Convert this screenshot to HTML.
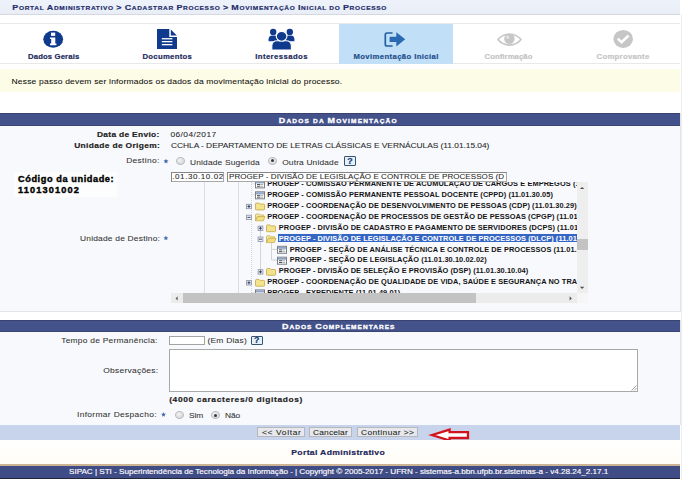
<!DOCTYPE html>
<html><head><meta charset="utf-8">
<style>
html,body{margin:0;padding:0;width:686px;height:480px;overflow:hidden;background:#fff;font-family:"Liberation Sans",sans-serif;position:relative;}
div{position:absolute;box-sizing:border-box;}
.t{white-space:nowrap;line-height:1;transform-origin:0 0;-webkit-text-stroke:0.08px currentColor;}
.t.bd{-webkit-text-stroke:0.2px currentColor;}
.tr{white-space:nowrap;line-height:1;font-size:7.4px;font-weight:bold;color:#141414;}
svg{position:absolute;left:0;top:0;overflow:visible;}
.radio{width:9px;height:8px;border:1px solid #b9bbbe;border-radius:50%;background:radial-gradient(ellipse at 40% 35%,#f4f4f4 0,#e2e2e4 45%,#cfd0d3 100%);}
.radio.on::after{content:"";position:absolute;left:2px;top:1.6px;width:3px;height:3px;border-radius:50%;background:#3a3a3a;}
.help{border:1px solid #36546f;border-radius:1px;background:#e4f0fa;}
.btn{border:1px solid #b4b7be;background:#e6e8ec;}
</style></head><body>

<!-- breadcrumb bar -->
<div style="left:0;top:0;width:680px;height:15px;background:linear-gradient(#eef3fb,#e9eef6);border-bottom:1px solid #d5d8de;"></div>

<!-- wizard -->
<div style="left:0;top:23px;width:680px;height:1px;background:#e8e8e8;"></div>
<div style="left:0;top:63px;width:680px;height:1px;background:#e8e8e8;"></div>
<div style="left:338.5px;top:24px;width:114px;height:39.5px;background:#c2dff8;"></div>

<svg width="686" height="480" viewBox="0 0 686 480">
  <!-- info -->
  <ellipse cx="53.2" cy="39.3" rx="9.9" ry="8.5" fill="#0f3a8e"/>
  <rect x="51" y="32.6" width="4.2" height="3.3" fill="#fff"/>
  <path d="M50 37.4 H55.3 V43.6 H56.4 V45.3 H50 V43.6 H51.2 V39.1 H50 Z" fill="#fff"/>
  <!-- document -->
  <path d="M157 29 H169.3 V36.9 H177 V49 H157 Z" fill="#0f3a8e"/>
  <path d="M170.8 29.6 L176.8 35.4 H170.8 Z" fill="#0f3a8e"/>
  <rect x="161.8" y="38.1" width="10.6" height="1.3" fill="#fff"/>
  <rect x="161.8" y="41.0" width="10.6" height="1.3" fill="#fff"/>
  <rect x="161.8" y="44.0" width="10.6" height="1.3" fill="#fff"/>
  <!-- users -->
  <g fill="#0f3a8e">
    <circle cx="273.2" cy="31.9" r="3.2"/>
    <circle cx="289.8" cy="31.9" r="3.2"/>
    <path d="M268.6 41.2 V39.2 Q268.6 35.4 272.4 35.4 H274.2 Q278 35.4 278 39.2 V41.2 Z"/>
    <path d="M285 41.2 V39.2 Q285 35.4 288.8 35.4 H290.6 Q294.4 35.4 294.4 39.2 V41.2 Z"/>
  </g>
  <g fill="#0f3a8e" stroke="#fff" stroke-width="1.1">
    <path d="M271.8 50 V46 Q271.8 40.7 277.2 40.7 H286 Q291.4 40.7 291.4 46 V50 Z"/>
    <ellipse cx="281.6" cy="36.3" rx="5.3" ry="4.9"/>
  </g>
  <!-- sign-in -->
  <path d="M392.6 33 H387 Q385.3 33 385.3 34.8 V44.2 Q385.3 46 387 46 H392.6" fill="none" stroke="#22609f" stroke-width="1.7"/>
  <path d="M389.6 36.8 H396.3 V32.2 L405.2 39.3 L396.3 46.4 V41.9 H389.6 Z" fill="#2a6ab2"/>
  <!-- eye -->
  <path d="M498 39.6 C501.5 35 505.5 34.2 509.5 34.2 C513.5 34.2 517.5 35 521 39.6 C517.5 44.2 513.5 45.1 509.5 45.1 C505.5 45.1 501.5 44.2 498 39.6 Z" fill="none" stroke="#c6c6c6" stroke-width="1.6"/>
  <circle cx="509.4" cy="38.8" r="5.2" fill="#c6c6c6"/>
  <circle cx="507.6" cy="37.2" r="1.6" fill="#e4e4e4"/>
  <!-- check circle -->
  <ellipse cx="623.2" cy="38.9" rx="9.8" ry="9" fill="#c6c6c6"/>
  <path d="M617.8 38.6 L621.5 42.2 L628.6 35.6" fill="none" stroke="#fff" stroke-width="2.6"/>
</svg>

<!-- info band -->
<div style="left:0;top:69px;width:680px;height:23px;background:#fdfce7;"></div>

<!-- section 1 -->
<div style="left:0;top:113px;width:681px;height:199px;background:#f8f9fc;border-right:1px solid #e3e5ea;border-bottom:1px solid #e3e5ea;"></div>
<div style="left:0;top:113px;width:680px;height:13px;background:#44528b;border-top:1px solid #39426f;border-bottom:1px solid #3b4573;"></div>

<div style="left:14px;top:172px;width:103px;height:25px;background:#fdfdfe;"></div>
<!-- radios destino -->
<div class="radio" style="left:176px;top:156.8px;"></div>
<div class="radio on" style="left:267.8px;top:156.8px;"></div>
<svg width="686" height="480"><path d="M166.00 158.70 L166.69 160.35 L168.47 160.50 L167.11 161.66 L167.53 163.40 L166.00 162.47 L164.47 163.40 L164.89 161.66 L163.53 160.50 L165.31 160.35 Z" fill="#4468ad"/></svg>
<div class="help" style="left:344.2px;top:156.1px;width:11.5px;height:9.5px;"></div>
<div class="t bd" style="left:347.3px;top:156.6px;font-size:8.8px;font-weight:bold;color:#173b6e;">?</div>

<!-- inputs -->
<div style="left:170.9px;top:171.6px;width:53.6px;height:10.3px;background:#fff;border:1px solid #858585;border-right-color:#a8a8a8;border-bottom-color:#a8a8a8;"></div>
<div style="left:227.2px;top:171.6px;width:279.4px;height:10.3px;background:#fff;border:1px solid #858585;border-right-color:#a8a8a8;border-bottom-color:#a8a8a8;"></div>

<!-- star for destino unit -->
<svg width="686" height="480"><path d="M165.90 235.60 L166.59 237.25 L168.37 237.40 L167.01 238.56 L167.43 240.30 L165.90 239.37 L164.37 240.30 L164.79 238.56 L163.43 237.40 L165.21 237.25 Z" fill="#4468ad"/></svg>

<!-- tree container -->
<div id="tree" style="left:171px;top:181.8px;width:416.6px;height:121.5px;overflow:hidden;">
<svg width="420" height="125"><path d="M33.5 0 V111.69999999999999 M67.5 0 V111.69999999999999" stroke="#dcdde0" stroke-width="1"/><path d="M80.5 0 V111.69999999999999 M80.5 1.799999999999983 H84 M80.5 12.699999999999989 H84 M80.5 110.69999999999999 H84" stroke="#c8cacd" stroke-width="0.8" stroke-dasharray="1 1"/><path d="M89.5 47.19999999999999 V88.19999999999999 M100.5 59.19999999999999 V78.0 M100.5 67.39999999999998 H106 M100.5 78.0 H106" stroke="#c8cacd" stroke-width="0.8"/><g transform="translate(84.00,-1.60)"><rect x="0.5" y="0.5" width="9" height="7" fill="#fdfdfd" stroke="#7b7f86" stroke-width="1"/><rect x="1" y="1" width="8" height="2" fill="#8ea3c7"/><rect x="2" y="3.6" width="3.2" height="0.9" fill="#404040"/><rect x="5.4" y="3.6" width="2.8" height="0.9" fill="#9aa"/><rect x="2" y="5.4" width="3.2" height="0.9" fill="#404040"/><rect x="5.4" y="5.4" width="2.8" height="0.9" fill="#9aa"/></g><g transform="translate(84.00,9.30)"><rect x="0.5" y="0.5" width="9" height="7" fill="#fdfdfd" stroke="#7b7f86" stroke-width="1"/><rect x="1" y="1" width="8" height="2" fill="#8ea3c7"/><rect x="2" y="3.6" width="3.2" height="0.9" fill="#404040"/><rect x="5.4" y="3.6" width="2.8" height="0.9" fill="#9aa"/><rect x="2" y="5.4" width="3.2" height="0.9" fill="#404040"/><rect x="5.4" y="5.4" width="2.8" height="0.9" fill="#9aa"/></g><g transform="translate(84.00,20.60)"><path d="M0.5 1.5 Q0.5 0.5 1.5 0.5 H4 L5 1.5 H8.8 Q9.6 1.5 9.6 2.3 V6.6 Q9.6 7.3 8.8 7.3 H1.3 Q0.5 7.3 0.5 6.6 Z" fill="#f3e38c" stroke="#c9ad52" stroke-width="0.9"/></g><g transform="translate(75.20,21.90)"><rect x="0.4" y="0.4" width="4.8" height="4.4" fill="#eef0f6" stroke="#8790a8" stroke-width="0.8"/><path d="M1.2 2.55 H4.3 M2.75 1 V4.1" stroke="#2b3550" stroke-width="0.9"/></g><g transform="translate(84.00,31.50)"><path d="M0.5 1.5 Q0.5 0.5 1.5 0.5 H4 L5 1.5 H8.6 V3 H2.6 L0.5 7.2 Z" fill="#f6eaa8" stroke="#c9ad52" stroke-width="0.8"/><path d="M2.4 3 H10 L8.4 7.3 H0.5 Z" fill="#f1de7c" stroke="#c9ad52" stroke-width="0.8"/></g><g transform="translate(75.20,32.80)"><rect x="0.4" y="0.4" width="4.8" height="4.4" fill="#eef0f6" stroke="#8790a8" stroke-width="0.8"/><path d="M1.2 2.55 H4.3" stroke="#2b3550" stroke-width="0.9"/></g><g transform="translate(95.00,42.40)"><path d="M0.5 1.5 Q0.5 0.5 1.5 0.5 H4 L5 1.5 H8.8 Q9.6 1.5 9.6 2.3 V6.6 Q9.6 7.3 8.8 7.3 H1.3 Q0.5 7.3 0.5 6.6 Z" fill="#f3e38c" stroke="#c9ad52" stroke-width="0.9"/></g><g transform="translate(86.70,43.70)"><rect x="0.4" y="0.4" width="4.8" height="4.4" fill="#eef0f6" stroke="#8790a8" stroke-width="0.8"/><path d="M1.2 2.55 H4.3 M2.75 1 V4.1" stroke="#2b3550" stroke-width="0.9"/></g><g transform="translate(95.00,53.30)"><path d="M0.5 1.5 Q0.5 0.5 1.5 0.5 H4 L5 1.5 H8.6 V3 H2.6 L0.5 7.2 Z" fill="#f6eaa8" stroke="#c9ad52" stroke-width="0.8"/><path d="M2.4 3 H10 L8.4 7.3 H0.5 Z" fill="#f1de7c" stroke="#c9ad52" stroke-width="0.8"/></g><g transform="translate(86.70,54.60)"><rect x="0.4" y="0.4" width="4.8" height="4.4" fill="#eef0f6" stroke="#8790a8" stroke-width="0.8"/><path d="M1.2 2.55 H4.3" stroke="#2b3550" stroke-width="0.9"/></g><g transform="translate(106.00,63.80)"><rect x="0.5" y="0.5" width="9" height="7" fill="#fdfdfd" stroke="#7b7f86" stroke-width="1"/><rect x="1" y="1" width="8" height="2" fill="#8ea3c7"/><rect x="2" y="3.6" width="3.2" height="0.9" fill="#404040"/><rect x="5.4" y="3.6" width="2.8" height="0.9" fill="#9aa"/><rect x="2" y="5.4" width="3.2" height="0.9" fill="#404040"/><rect x="5.4" y="5.4" width="2.8" height="0.9" fill="#9aa"/></g><g transform="translate(106.00,74.70)"><rect x="0.5" y="0.5" width="9" height="7" fill="#fdfdfd" stroke="#7b7f86" stroke-width="1"/><rect x="1" y="1" width="8" height="2" fill="#8ea3c7"/><rect x="2" y="3.6" width="3.2" height="0.9" fill="#404040"/><rect x="5.4" y="3.6" width="2.8" height="0.9" fill="#9aa"/><rect x="2" y="5.4" width="3.2" height="0.9" fill="#404040"/><rect x="5.4" y="5.4" width="2.8" height="0.9" fill="#9aa"/></g><g transform="translate(95.00,86.00)"><path d="M0.5 1.5 Q0.5 0.5 1.5 0.5 H4 L5 1.5 H8.8 Q9.6 1.5 9.6 2.3 V6.6 Q9.6 7.3 8.8 7.3 H1.3 Q0.5 7.3 0.5 6.6 Z" fill="#f3e38c" stroke="#c9ad52" stroke-width="0.9"/></g><g transform="translate(86.70,87.30)"><rect x="0.4" y="0.4" width="4.8" height="4.4" fill="#eef0f6" stroke="#8790a8" stroke-width="0.8"/><path d="M1.2 2.55 H4.3 M2.75 1 V4.1" stroke="#2b3550" stroke-width="0.9"/></g><g transform="translate(84.00,96.90)"><path d="M0.5 1.5 Q0.5 0.5 1.5 0.5 H4 L5 1.5 H8.8 Q9.6 1.5 9.6 2.3 V6.6 Q9.6 7.3 8.8 7.3 H1.3 Q0.5 7.3 0.5 6.6 Z" fill="#f3e38c" stroke="#c9ad52" stroke-width="0.9"/></g><g transform="translate(75.20,98.20)"><rect x="0.4" y="0.4" width="4.8" height="4.4" fill="#eef0f6" stroke="#8790a8" stroke-width="0.8"/><path d="M1.2 2.55 H4.3 M2.75 1 V4.1" stroke="#2b3550" stroke-width="0.9"/></g><g transform="translate(84.00,107.40)"><rect x="0.5" y="0.5" width="9" height="7" fill="#fdfdfd" stroke="#7b7f86" stroke-width="1"/><rect x="1" y="1" width="8" height="2" fill="#8ea3c7"/><rect x="2" y="3.6" width="3.2" height="0.9" fill="#404040"/><rect x="5.4" y="3.6" width="2.8" height="0.9" fill="#9aa"/><rect x="2" y="5.4" width="3.2" height="0.9" fill="#404040"/><rect x="5.4" y="5.4" width="2.8" height="0.9" fill="#9aa"/></g></svg>
<div class="tr" style="left:96.20px;top:-1.66px;letter-spacing:0.080px;">PROGEP - COMISSÃO PERMANENTE DE ACUMULAÇÃO DE CARGOS E EMPREGOS (11.01.30.06)</div>
<div class="tr" style="left:96.20px;top:9.24px;letter-spacing:0.080px;">PROGEP - COMISSÃO PERMANENTE PESSOAL DOCENTE (CPPD) (11.01.30.05)</div>
<div class="tr" style="left:96.20px;top:20.14px;letter-spacing:0.080px;">PROGEP - COORDENAÇÃO DE DESENVOLVIMENTO DE PESSOAS (CDP) (11.01.30.29)</div>
<div class="tr" style="left:96.20px;top:31.04px;letter-spacing:0.080px;">PROGEP - COORDENAÇÃO DE PROCESSOS DE GESTÃO DE PESSOAS (CPGP) (11.01.30.10)</div>
<div class="tr" style="left:107.80px;top:41.94px;letter-spacing:0.080px;">PROGEP - DIVISÃO DE CADASTRO E PAGAMENTO DE SERVIDORES (DCPS) (11.01.30.10.01)</div>
<div style="left:106.50px;top:52.40px;width:400px;height:7.6px;background:#3566c4;"></div>
<div class="tr" style="left:107.80px;top:52.84px;letter-spacing:0.080px;color:#fff">PROGEP - DIVISÃO DE LEGISLAÇÃO E CONTROLE DE PROCESSOS (DLCP) (11.01.30.10.02)</div>
<div class="tr" style="left:118.70px;top:63.74px;letter-spacing:0.080px;">PROGEP - SEÇÃO DE ANÁLISE TÉCNICA E CONTROLE DE PROCESSOS (11.01.30.10.02.01)</div>
<div class="tr" style="left:118.70px;top:74.64px;letter-spacing:0.080px;">PROGEP - SEÇÃO DE LEGISLAÇÃO (11.01.30.10.02.02)</div>
<div class="tr" style="left:107.80px;top:85.54px;letter-spacing:0.080px;">PROGEP - DIVISÃO DE SELEÇÃO E PROVISÃO (DSP) (11.01.30.10.04)</div>
<div class="tr" style="left:96.20px;top:96.44px;letter-spacing:0.080px;">PROGEP - COORDENAÇÃO DE QUALIDADE DE VIDA, SAÚDE E SEGURANÇA NO TRABALHO (11.01.30.08)</div>
<div class="tr" style="left:96.20px;top:107.34px;letter-spacing:0.080px;">PROGEP - EXPEDIENTE (11.01.49.01)</div>
<div style="left:405.60px;top:0;width:11px;height:111.70px;background:#eeeeee;"></div>
<div style="left:405.60px;top:57.10px;width:11px;height:11.3px;background:#c3c3c3;"></div>
<div style="left:0;top:111.70px;width:405.60px;height:9.5px;background:#ececec;"></div>
<div style="left:11.60px;top:111.70px;width:293.50px;height:9.5px;background:#c3c3c3;"></div>
<div style="left:405.60px;top:111.70px;width:11px;height:9.5px;background:#f6f6f6;"></div>
<svg width="420" height="125"><path d="M408.90 7.10 L411.10 4.90 L413.30 7.10 Z" fill="#505050"/><path d="M408.90 104.70 L411.10 106.90 L413.30 104.70 Z" fill="#505050"/><path d="M4.50 116.40 L6.70 114.20 V118.60 Z" fill="#606060"/><path d="M400.80 116.40 L398.60 114.20 V118.60 Z" fill="#505050"/></svg>
</div>

<!-- section 2 -->
<div style="left:0;top:320px;width:681px;height:105px;background:#f8f9fc;border-right:1px solid #e3e5ea;"></div>
<div style="left:0;top:320px;width:680px;height:12.2px;background:#44528b;border-top:1px solid #39426f;border-bottom:1px solid #3b4573;"></div>
<div style="left:169px;top:335.8px;width:36px;height:9.6px;background:#fff;border:1px solid #a4a4a4;"></div>
<div class="help" style="left:250.5px;top:335.8px;width:12.4px;height:9.6px;"></div>
<div class="t bd" style="left:254.1px;top:336.4px;font-size:8.8px;font-weight:bold;color:#173b6e;">?</div>
<div style="left:169px;top:348.9px;width:469px;height:42.8px;background:#fff;border:1px solid #a8a8a8;"></div>
<svg width="686" height="480"><path d="M631.5 390.5 L636.5 385.5 M634 390.5 L636.5 388" stroke="#9a9a9a" stroke-width="0.9"/>
<path d="M163.50 412.00 L164.19 413.65 L165.97 413.80 L164.61 414.96 L165.03 416.70 L163.50 415.77 L161.97 416.70 L162.39 414.96 L161.03 413.80 L162.81 413.65 Z" fill="#4468ad"/></svg>
<div class="radio" style="left:174.6px;top:411px;"></div>
<div class="radio on" style="left:211.3px;top:411px;"></div>

<!-- button bar -->
<div style="left:0;top:425px;width:680px;height:15px;background:#c8d4eb;"></div>
<div class="btn" style="left:257.4px;top:427.4px;width:47.9px;height:9.8px;"></div>
<div class="btn" style="left:308.7px;top:427.4px;width:43.5px;height:9.8px;"></div>
<div class="btn" style="left:356.6px;top:427.4px;width:61.7px;height:9.8px;"></div>
<svg width="686" height="480"><path d="M432 435 L449.6 429.6 V432.2 H468 V438 H449.6 V440.5 Z" fill="#fff" stroke="#d3131c" stroke-width="2.3" stroke-linejoin="miter"/></svg>

<!-- footer -->
<div style="left:0;top:440px;width:680px;height:24px;background:linear-gradient(#fffffe,#fffdf6);"></div>
<div style="left:0;top:463.9px;width:680px;height:2.2px;background:#cbb393;"></div>
<div style="left:0;top:466.2px;width:680px;height:11.6px;background:#3f4c86;"></div>
<div style="left:0;top:477.8px;width:680px;height:1.4px;background:#23253a;"></div>
<div style="left:681px;top:14px;width:1px;height:466px;background:#eceef1;"></div>
<div style="left:2px;top:479px;width:110px;height:1px;background:#fff;"></div>
<div style="left:115px;top:479px;width:110px;height:1px;background:#fff;"></div>
<div style="left:228px;top:479px;width:110px;height:1px;background:#fff;"></div>
<div style="left:341px;top:479px;width:110px;height:1px;background:#fff;"></div>
<div style="left:454px;top:479px;width:110px;height:1px;background:#fff;"></div>
<div style="left:567px;top:479px;width:110px;height:1px;background:#fff;"></div>

<div class="t bd" style="left:12.30px;top:4.31px;transform:scaleY(0.88);font-size:6.55px;line-height:8.98px;font-weight:bold;color:#1f2d6b;letter-spacing:0.668px;"><span style="font-size:8.98px">P</span>ORTAL <span style="font-size:8.98px">A</span>DMINISTRATIVO <span style="font-size:8.98px">&gt;</span> <span style="font-size:8.98px">C</span>ADASTRAR <span style="font-size:8.98px">P</span>ROCESSO <span style="font-size:8.98px">&gt;</span> <span style="font-size:8.98px">M</span>OVIMENTAÇÃO <span style="font-size:8.98px">I</span>NICIAL DO <span style="font-size:8.98px">P</span>ROCESSO</div>
<div class="t bd" style="left:28.00px;top:53.84px;transform:scaleY(0.88);font-size:7.73px;font-weight:bold;color:#1d2b5c;letter-spacing:0.132px;">Dados Gerais</div>
<div class="t bd" style="left:142.50px;top:53.84px;transform:scaleY(0.88);font-size:7.73px;font-weight:bold;color:#1d2b5c;letter-spacing:0.287px;">Documentos</div>
<div class="t bd" style="left:255.20px;top:53.84px;transform:scaleY(0.88);font-size:7.73px;font-weight:bold;color:#1d2b5c;letter-spacing:0.427px;">Interessados</div>
<div class="t bd" style="left:353.40px;top:53.84px;transform:scaleY(0.88);font-size:7.73px;font-weight:bold;color:#23508c;letter-spacing:0.385px;">Movimentação Inicial</div>
<div class="t bd" style="left:484.50px;top:53.84px;transform:scaleY(0.88);font-size:7.73px;font-weight:bold;color:#c4c4c4;letter-spacing:0.072px;">Confirmação</div>
<div class="t bd" style="left:596.50px;top:53.84px;transform:scaleY(0.88);font-size:7.73px;font-weight:bold;color:#c4c4c4;letter-spacing:0.302px;">Comprovante</div>
<div class="t" style="left:11.50px;top:78.15px;transform:scaleY(0.88);font-size:8.52px;color:#111;letter-spacing:0.175px;">Nesse passo devem ser informados os dados da movimentação inicial do processo.</div>
<div class="t bd" style="left:278.80px;top:116.51px;transform:scaleY(0.88);font-size:6.55px;line-height:8.98px;font-weight:bold;color:#fff;letter-spacing:1.171px;-webkit-text-stroke:0.35px #fff;"><span style="font-size:8.98px">D</span>ADOS DA <span style="font-size:8.98px">M</span>OVIMENTAÇÃO</div>
<div class="t bd" style="left:97.00px;top:130.84px;transform:scaleY(0.88);font-size:8.41px;font-weight:bold;color:#222;letter-spacing:0.300px;">Data de Envio:</div>
<div class="t" style="left:170.40px;top:130.64px;transform:scaleY(0.88);font-size:8.41px;color:#2a2a2a;letter-spacing:0.417px;">06/04/2017</div>
<div class="t bd" style="left:74.20px;top:142.04px;transform:scaleY(0.88);font-size:8.41px;font-weight:bold;color:#222;letter-spacing:0.343px;">Unidade de Origem:</div>
<div class="t" style="left:171.00px;top:141.94px;transform:scaleY(0.88);font-size:8.41px;color:#2a2a2a;letter-spacing:-0.048px;">CCHLA - DEPARTAMENTO DE LETRAS CLÁSSICAS E VERNÁCULAS (11.01.15.04)</div>
<div class="t" style="left:126.20px;top:157.04px;transform:scaleY(0.88);font-size:8.41px;color:#333;letter-spacing:0.320px;">Destino:</div>
<div class="t" style="left:190.00px;top:158.54px;transform:scaleY(0.88);font-size:8.41px;color:#333;letter-spacing:0.157px;">Unidade Sugerida</div>
<div class="t" style="left:282.20px;top:158.54px;transform:scaleY(0.88);font-size:8.41px;color:#333;letter-spacing:0.142px;">Outra Unidade</div>
<div class="t bd" style="left:18.00px;top:175.11px;transform:scaleY(1.0);font-size:9.20px;font-weight:bold;color:#000;letter-spacing:0.579px;-webkit-text-stroke:0.4px #000;">Código da unidade:</div>
<div class="t bd" style="left:18.00px;top:186.21px;transform:scaleY(1.0);font-size:9.20px;font-weight:bold;color:#000;letter-spacing:1.144px;-webkit-text-stroke:0.4px #000;">1101301002</div>
<div class="t" style="left:80.00px;top:235.04px;transform:scaleY(0.88);font-size:8.41px;color:#333;letter-spacing:0.204px;">Unidade de Destino:</div>
<div class="t bd" style="left:281.90px;top:322.51px;transform:scaleY(0.88);font-size:6.55px;line-height:8.98px;font-weight:bold;color:#fff;letter-spacing:1.018px;-webkit-text-stroke:0.35px #fff;"><span style="font-size:8.98px">D</span>ADOS <span style="font-size:8.98px">C</span>OMPLEMENTARES</div>
<div class="t" style="left:61.20px;top:336.84px;transform:scaleY(0.88);font-size:8.41px;color:#333;letter-spacing:0.256px;">Tempo de Permanência:</div>
<div class="t" style="left:207.40px;top:336.84px;transform:scaleY(0.88);font-size:8.41px;color:#333;letter-spacing:0.248px;">(Em Dias)</div>
<div class="t" style="left:103.30px;top:366.84px;transform:scaleY(0.88);font-size:8.41px;color:#333;letter-spacing:0.264px;">Observações:</div>
<div class="t bd" style="left:169.20px;top:396.24px;transform:scaleY(0.88);font-size:8.41px;font-weight:bold;color:#222;letter-spacing:0.634px;">(4000 caracteres/0 digitados)</div>
<div class="t" style="left:77.00px;top:411.14px;transform:scaleY(0.88);font-size:8.41px;color:#333;letter-spacing:0.334px;">Informar Despacho:</div>
<div class="t" style="left:189.00px;top:412.34px;transform:scaleY(0.88);font-size:8.41px;color:#333;letter-spacing:-0.130px;">Sim</div>
<div class="t" style="left:225.00px;top:412.34px;transform:scaleY(0.88);font-size:8.41px;color:#333;letter-spacing:-0.090px;">Não</div>
<div class="t bd" style="left:291.30px;top:448.97px;transform:scaleY(0.88);font-size:8.64px;font-weight:bold;color:#1c2558;letter-spacing:0.325px;">Portal Administrativo</div>
<div class="t" style="left:69.00px;top:469.31px;transform:scaleY(0.88);font-size:8.18px;color:#fff;letter-spacing:-0.040px;-webkit-text-stroke:0.15px #fff;">SIPAC | STI - Superintendência de Tecnologia da Informação - | Copyright © 2005-2017 - UFRN - sistemas-a.bbn.ufpb.br.sistemas-a - v4.28.24_2.17.1</div>
<div class="t" style="left:172.30px;top:173.43px;transform:scaleY(1.0);font-size:8.00px;color:#2a2a2a;letter-spacing:0.577px;">.01.30.10.02</div>
<div class="t" style="left:229.00px;top:173.43px;transform:scaleY(1.0);font-size:8.00px;color:#2a2a2a;letter-spacing:0.073px;">PROGEP - DIVISÃO DE LEGISLAÇÃO E CONTROLE DE PROCESSOS (D</div>
<div class="t" style="left:262.00px;top:429.34px;transform:scaleY(0.88);font-size:8.41px;color:#222;letter-spacing:0.638px;">&lt;&lt; Voltar</div>
<div class="t" style="left:313.00px;top:429.34px;transform:scaleY(0.88);font-size:8.41px;color:#222;letter-spacing:0.157px;">Cancelar</div>
<div class="t" style="left:361.00px;top:429.34px;transform:scaleY(0.88);font-size:8.41px;color:#222;letter-spacing:0.400px;">Continuar &gt;&gt;</div>
</body></html>
